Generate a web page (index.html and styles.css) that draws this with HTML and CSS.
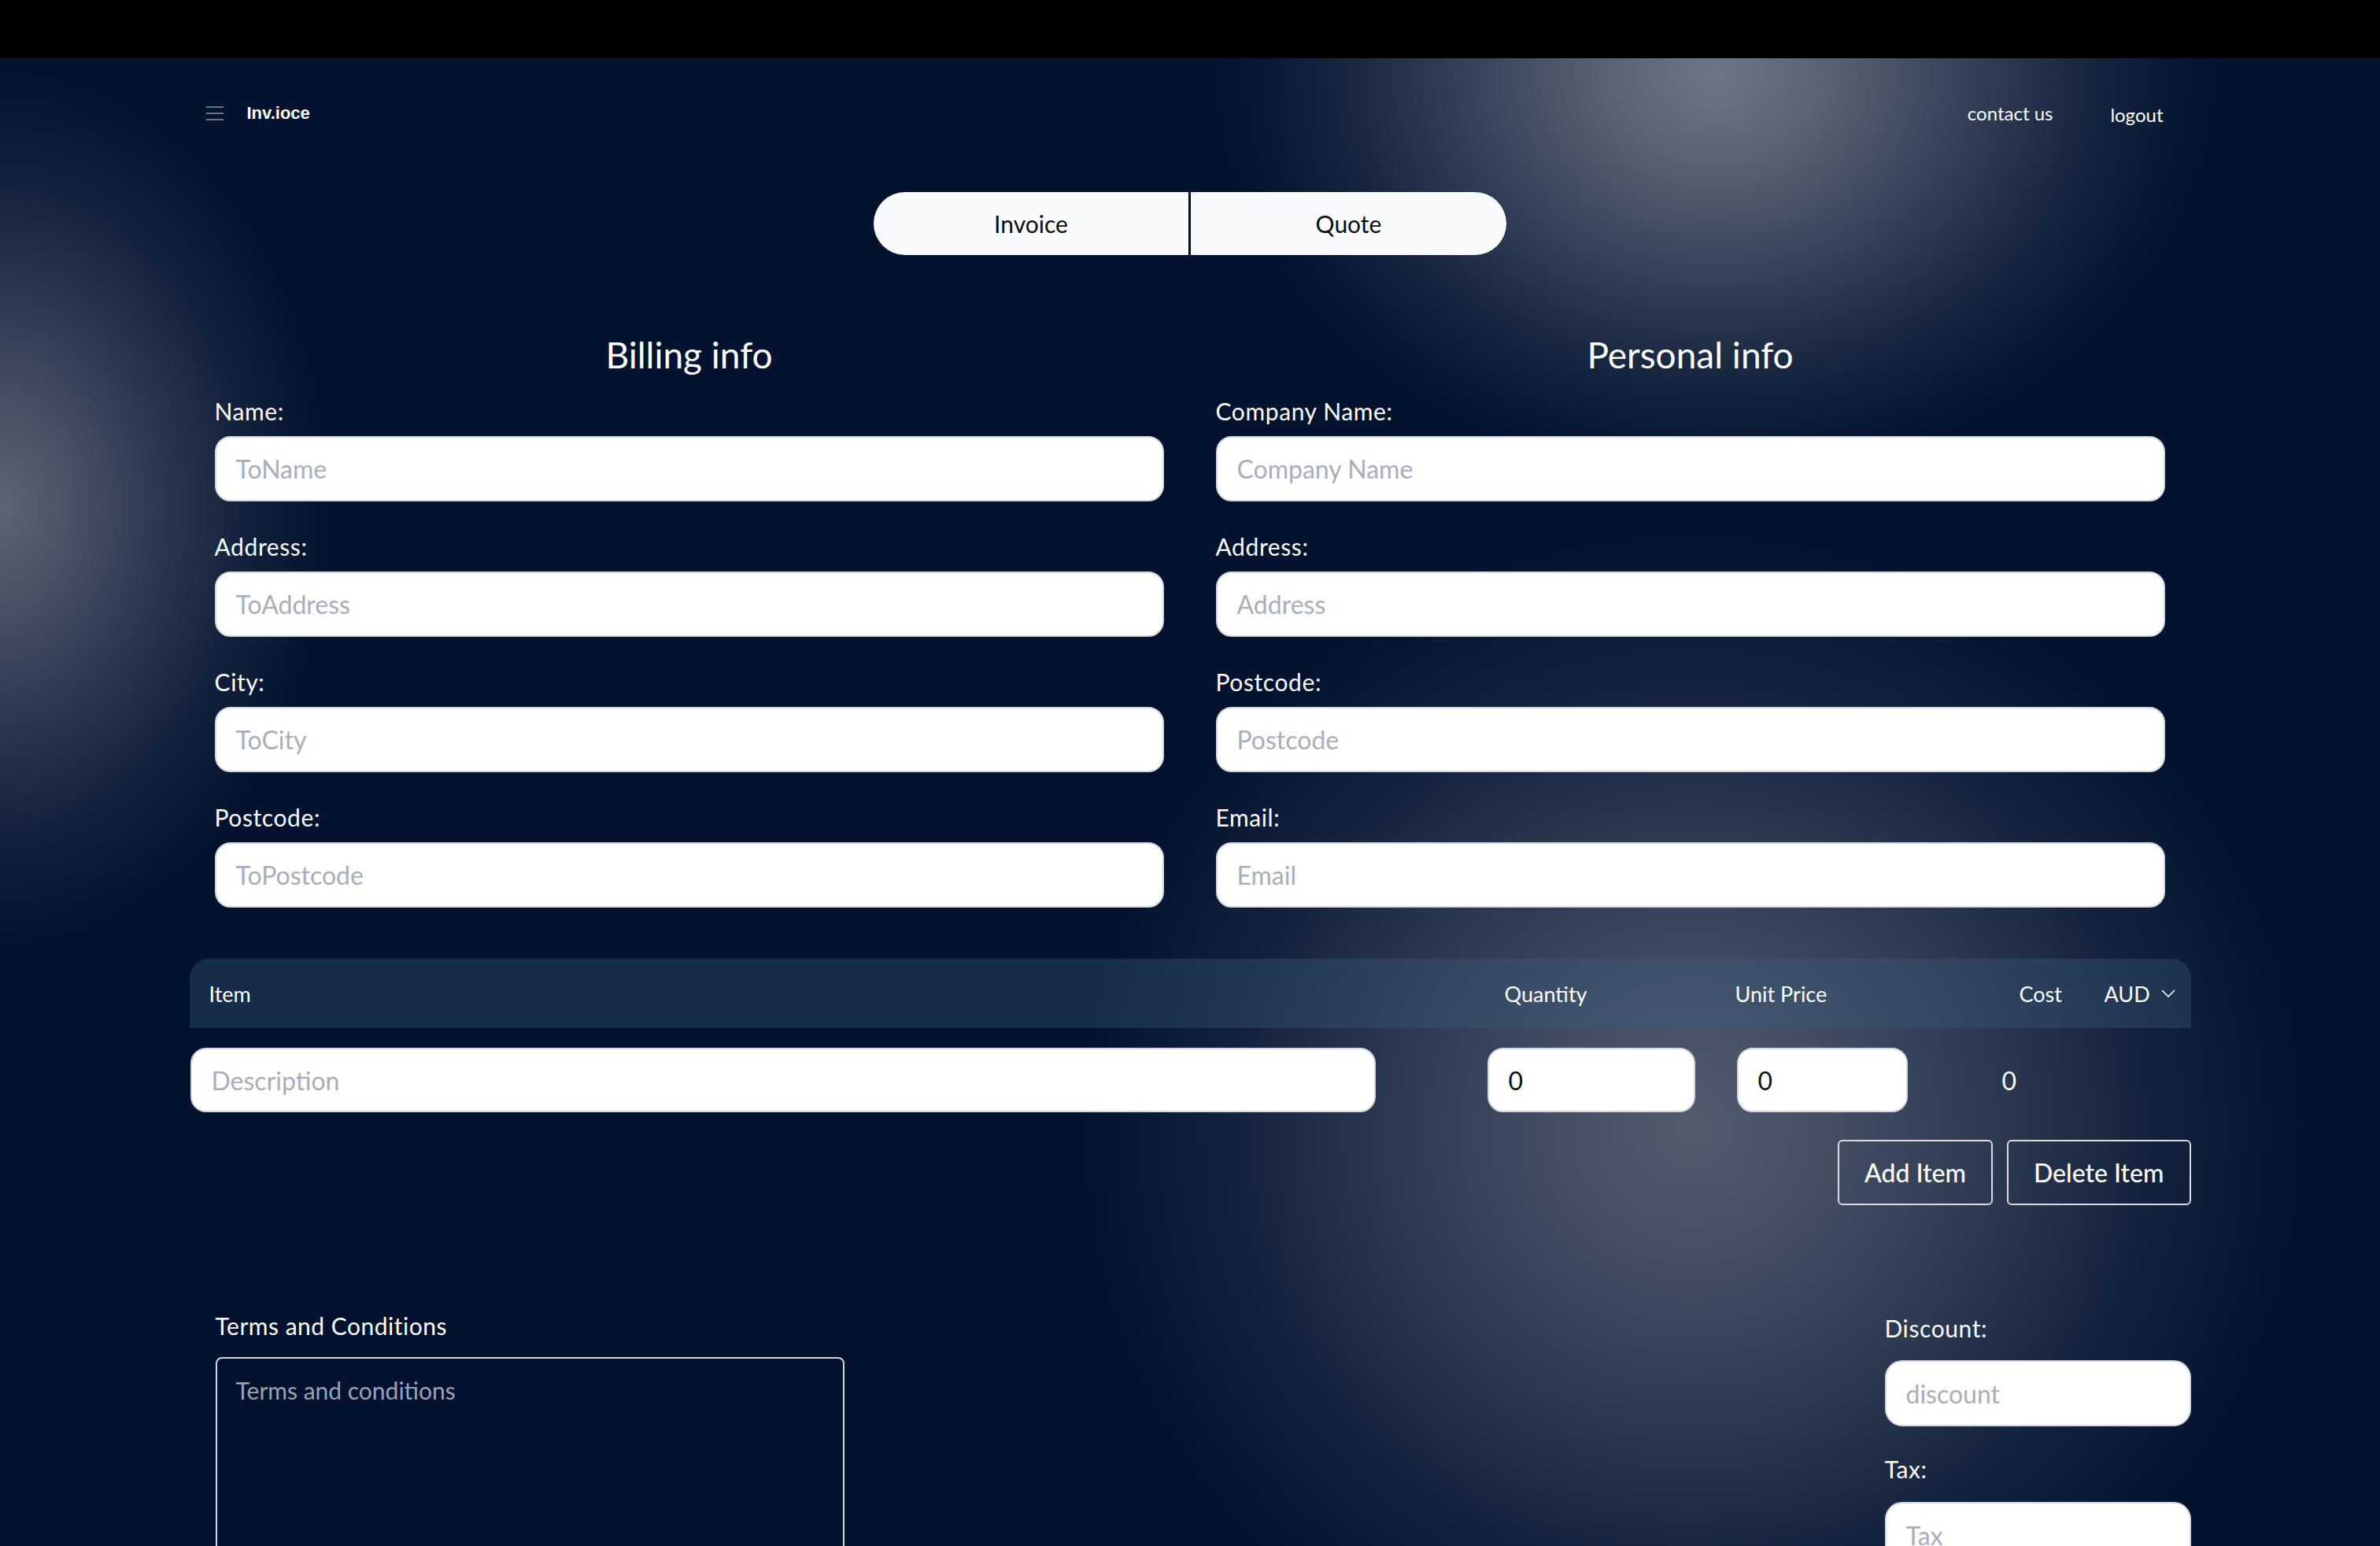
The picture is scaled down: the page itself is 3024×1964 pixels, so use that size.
FILE: index.html
```html
<!DOCTYPE html>
<html lang="en">
<head>
<meta charset="utf-8">
<title>Inv.ioce</title>
<link rel="stylesheet" href="styles.css">
</head>
<body>
<div class="topbar"></div>
<div class="page">
  <div class="container">
    <nav class="nav">
      <div class="brand">
        <svg class="burger" width="22" height="18" viewBox="0 0 22 18"><path d="M0 1h22M0 9h22M0 17h22" stroke="#6b7280" stroke-width="2"/></svg>
        <span class="logo">Inv.ioce</span>
      </div>
      <div class="links">
        <a class="link">contact us</a>
        <a class="link logout">logout</a>
      </div>
    </nav>

    <div class="toggle">
      <button class="tab tab-left">Invoice</button>
      <button class="tab tab-right">Quote</button>
    </div>

    <section class="info">
      <div class="col">
        <h2>Billing info</h2>
        <div class="field"><label>Name:</label><input class="input" placeholder="ToName"></div>
        <div class="field"><label>Address:</label><input class="input" placeholder="ToAddress"></div>
        <div class="field"><label>City:</label><input class="input" placeholder="ToCity"></div>
        <div class="field"><label>Postcode:</label><input class="input" placeholder="ToPostcode"></div>
      </div>
      <div class="col">
        <h2>Personal info</h2>
        <div class="field"><label>Company Name:</label><input class="input" placeholder="Company Name"></div>
        <div class="field"><label>Address:</label><input class="input" placeholder="Address"></div>
        <div class="field"><label>Postcode:</label><input class="input" placeholder="Postcode"></div>
        <div class="field"><label>Email:</label><input class="input" placeholder="Email"></div>
      </div>
    </section>

    <section class="items">
      <div class="items-head">
        <span>Item</span>
        <span>Quantity</span>
        <span>Unit Price</span>
        <span>Cost</span>
        <span class="aud">AUD <svg width="18" height="10" viewBox="0 0 18 10"><path d="M1 1l8 8 8-8" fill="none" stroke="#ffffff" stroke-width="1.6"/></svg></span>
      </div>
      <div class="item-row">
        <input class="input desc" placeholder="Description">
        <input class="input qty" value="0">
        <input class="input price" value="0">
        <span class="cost">0</span>
      </div>
      <div class="item-actions">
        <button class="btn">Add Item</button>
        <button class="btn">Delete Item</button>
      </div>
    </section>

    <section class="extras">
      <div class="terms">
        <label>Terms and Conditions</label>
        <textarea placeholder="Terms and conditions"></textarea>
      </div>
      <div class="totals">
        <label>Discount:</label>
        <input class="input" placeholder="discount">
        <label class="tax-label">Tax:</label>
        <input class="input tax-input" placeholder="Tax">
      </div>
    </section>
  </div>
</div>
</body>
</html>
```

FILE: styles.css
```css
* { box-sizing: border-box; }

html, body {
  margin: 0;
  padding: 0;
  height: 1964px;
  overflow: hidden;
  background: #000;
}

body {
  font-family: Lato, "Noto Sans", sans-serif;
  color: #fff;
}

.topbar {
  height: 74px;
  background: #000;
}

.page {
  height: 1890px;
  overflow: hidden;
  background-color: #03132f;
  background-image:
    radial-gradient(ellipse 640px 520px at 2180px 20px, rgba(125,132,146,0.88) 0%, rgba(125,132,146,0.72) 20%, rgba(125,132,146,0.46) 45%, rgba(125,132,146,0.2) 70%, rgba(125,132,146,0.05) 90%, rgba(125,132,146,0) 100%),
    radial-gradient(ellipse 420px 560px at 0px 570px, rgba(105,112,128,0.88) 0%, rgba(105,112,128,0.68) 22%, rgba(105,112,128,0.4) 48%, rgba(105,112,128,0.15) 75%, rgba(105,112,128,0) 100%),
    radial-gradient(ellipse 780px 760px at 2150px 1360px, rgba(105,113,130,0.78) 0%, rgba(105,113,130,0.64) 22%, rgba(105,113,130,0.42) 48%, rgba(105,113,130,0.16) 75%, rgba(105,113,130,0) 100%);
}

.container {
  width: 2543px;
  margin: 0 auto;
}

/* nav */
.nav {
  height: 140px;
  display: flex;
  align-items: center;
  justify-content: space-between;
  padding: 0 35px 0 21px;
}

.brand {
  display: flex;
  align-items: center;
  gap: 30px;
}

.burger { display: block; }

.logo {
  font-family: "Liberation Sans", Arial, sans-serif;
  font-weight: 700;
  font-size: 22px;
  color: #fff;
}

.links {
  display: flex;
  align-items: center;
  gap: 73px;
}

.link {
  font-size: 24px;
  line-height: 1.2;
  color: #fff;
}

.logout { padding-top: 4px; }

/* toggle */
.toggle {
  margin-top: 30px;
  display: flex;
  justify-content: center;
  gap: 3px;
}

.tab {
  width: 400px;
  height: 80px;
  border: 0;
  background: #f8fafc;
  font-family: inherit;
  font-size: 30px;
  color: #0b0b0b;
}

.tab-left { border-radius: 40px 0 0 40px; }
.tab-right { width: 401px; border-radius: 0 40px 40px 0; }

/* info */
.info {
  margin-top: 99px;
  display: grid;
  grid-template-columns: 1fr 1fr;
  column-gap: 66px;
  padding: 0 33px 0 32px;
}

.col {
  display: flex;
  flex-direction: column;
}

.col h2 {
  margin: 0 0 27px;
  font-size: 46px;
  line-height: 55px;
  font-weight: 400;
  text-align: center;
}

.field {
  display: flex;
  flex-direction: column;
  gap: 14px;
}

.field + .field { margin-top: 40px; }

.field label,
.totals label {
  font-size: 30px;
  line-height: 35px;
  letter-spacing: 0.6px;
}

.input {
  height: 83px;
  border: 2px solid #d4d7dd;
  border-radius: 20px;
  background: #fff;
  padding: 0 25px;
  font-family: inherit;
  font-size: 32px;
  color: #111;
  outline: none;
}

.input::placeholder { color: #a9aeb9; }

/* items */
.items { margin-top: 65px; }

.items-head {
  height: 88px;
  border-radius: 25px 25px 0 0;
  background: rgba(60, 95, 125, 0.35);
  display: grid;
  grid-template-columns: 1646px 293px 361px 108px auto;
  align-items: center;
  padding-left: 25px;
  font-size: 27px;
}

.aud {
  display: flex;
  align-items: center;
  gap: 14px;
}

.item-row {
  margin-top: 25px;
  display: flex;
  align-items: center;
}

.item-row .input { height: 82px; }
.desc { margin-left: 1px; width: 1506px; }
.qty { margin-left: 142px; width: 264px; }
.price { margin-left: 53px; width: 217px; }

.cost {
  margin-left: 120px;
  font-size: 32px;
}

.item-actions {
  margin-top: 35px;
  display: flex;
  justify-content: flex-end;
  gap: 18px;
}

.btn {
  height: 83px;
  padding: 0 32px;
  border: 2px solid #d9dce2;
  border-radius: 6px;
  background: transparent;
  color: #fff;
  font-family: inherit;
  font-size: 32px;
  font-weight: 500;
}

/* extras */
.extras {
  margin-top: 135px;
  display: flex;
  justify-content: space-between;
  padding-left: 33px;
}

.terms {
  width: 799px;
  display: flex;
  flex-direction: column;
  gap: 22px;
}

.terms label {
  font-size: 30px;
  line-height: 36px;
  letter-spacing: 0.5px;
}

.terms textarea {
  height: 320px;
  border: 2px solid #d1d5db;
  border-radius: 8px;
  background: transparent;
  padding: 22px 24px;
  font-family: inherit;
  font-size: 30px;
  line-height: 36px;
  color: #fff;
  resize: none;
  outline: none;
}

.terms textarea::placeholder { color: #9ca3af; }

.totals {
  width: 389px;
  padding-top: 4px;
  display: flex;
  flex-direction: column;
}

.totals .input {
  margin-top: 23px;
  height: 84px;
  border-radius: 22px;
}

.totals .tax-label { margin-top: 37px; }
.totals .tax-input { margin-top: 24px; }
```
